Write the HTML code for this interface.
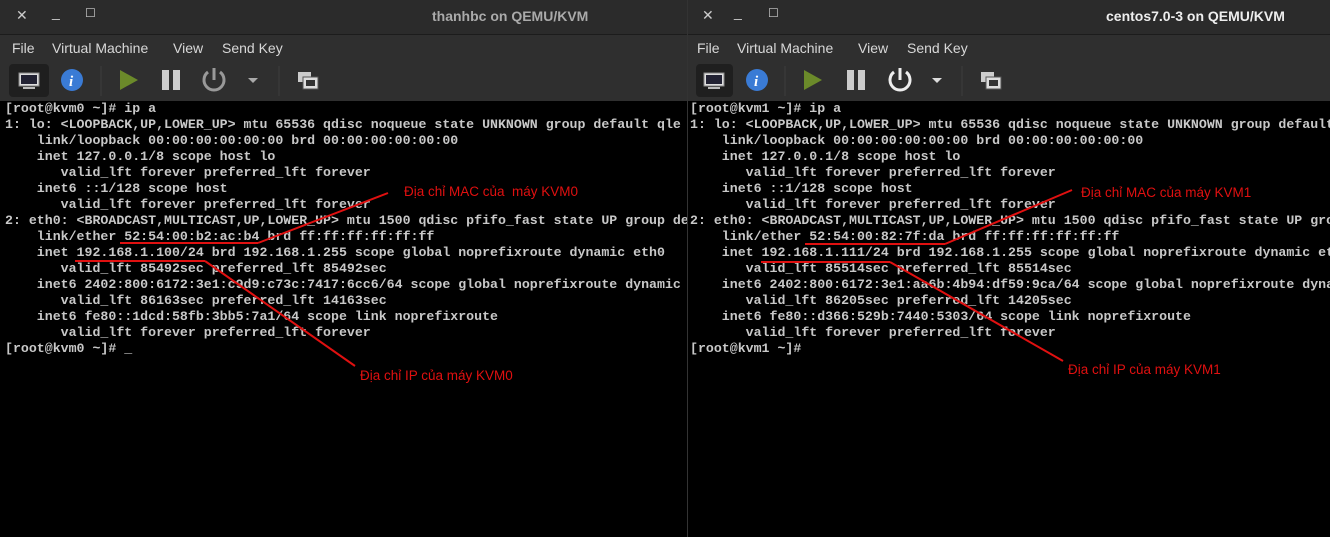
<!DOCTYPE html>
<html><head><meta charset="utf-8"><style>
body{margin:0;width:1330px;height:537px;background:#000;overflow:hidden;position:relative;font-family:"Liberation Sans",sans-serif}
.win{position:absolute;top:0;height:537px;background:#000;overflow:hidden}
.title{position:absolute;left:0;right:0;top:0;height:34px;background:#2b2b2b;border-bottom:1px solid #1c1c1c}
.title .t{position:absolute;top:8px;font-weight:bold;font-size:14px}
.wc{position:absolute;top:7px;color:#ccc;font-size:14px}
.menu{position:absolute;left:0;right:0;top:35px;height:25px;background:#2f2f2f;color:#d8d8d8;font-size:14px}
.menu span{position:absolute;top:5px}
.tb{position:absolute;left:0;right:0;top:60px;height:41px;background:#2f2f2f}
pre{position:absolute;margin:0;top:101px;font-family:"Liberation Mono",monospace;font-size:13.25px;line-height:16px;color:#c8c8c8;font-weight:bold;white-space:pre}
.ann{position:absolute;color:#e01010;font-size:13.5px}
</style></head><body>
<div class="win" style="left:0;width:687px">
 <div class="title"><span class="wc" style="left:16px">✕</span><span class="wc" style="left:52px;top:4px">_</span><span class="wc" style="left:85px;top:6px;font-size:12px">☐</span><span class="t" style="left:432px;color:#aaa">thanhbc on QEMU/KVM</span></div>
 <div class="menu"><span style="left:12px">File</span><span style="left:52px">Virtual Machine</span><span style="left:173px">View</span><span style="left:222px">Send Key</span></div>
 <div class="tb">
  <div style="position:absolute;left:9px;top:4px;width:40px;height:33px;background:#1f1f1f;border-radius:4px"></div>
  <svg width="687" height="41" style="position:absolute;left:0;top:0">
   <rect x="19" y="13" width="20" height="13" fill="#ddd" stroke="#888"/><rect x="21" y="15" width="16" height="9" fill="#223"/><rect x="23" y="27" width="12" height="2" fill="#bbb"/>
   <circle cx="72" cy="20" r="11" fill="#3a7bd5"/><text x="69" y="26" fill="#fff" font-size="15" font-weight="bold" font-style="italic" font-family="Liberation Serif">i</text>
   <line x1="101" y1="6" x2="101" y2="36" stroke="#3c3c3c"/>
   <polygon points="120,10 138,20 120,30" fill="#6b8a2a"/>
   <rect x="162" y="10" width="7" height="20" fill="#ccc"/><rect x="173" y="10" width="7" height="20" fill="#ccc"/>
   <path d="M208 12 A10 10 0 1 0 220 12" fill="none" stroke="#999" stroke-width="3"/><line x1="214" y1="8" x2="214" y2="20" stroke="#999" stroke-width="3"/>
   <polygon points="248,18 258,18 253,23" fill="#aaa"/>
   <line x1="279" y1="6" x2="279" y2="36" stroke="#3c3c3c"/>
   <rect x="298" y="12" width="13" height="10" fill="#ccc"/><rect x="303" y="17" width="15" height="12" fill="#ddd" stroke="#555"/><rect x="306" y="20" width="9" height="6" fill="#333"/>
  </svg>
 </div>
<pre style="left:5px">[root@kvm0 ~]# ip a
1: lo: &lt;LOOPBACK,UP,LOWER_UP&gt; mtu 65536 qdisc noqueue state UNKNOWN group default qle
    link/loopback 00:00:00:00:00:00 brd 00:00:00:00:00:00
    inet 127.0.0.1/8 scope host lo
       valid_lft forever preferred_lft forever
    inet6 ::1/128 scope host
       valid_lft forever preferred_lft forever
2: eth0: &lt;BROADCAST,MULTICAST,UP,LOWER_UP&gt; mtu 1500 qdisc pfifo_fast state UP group de
    link/ether 52:54:00:b2:ac:b4 brd ff:ff:ff:ff:ff:ff
    inet 192.168.1.100/24 brd 192.168.1.255 scope global noprefixroute dynamic eth0
       valid_lft 85492sec preferred_lft 85492sec
    inet6 2402:800:6172:3e1:c9d9:c73c:7417:6cc6/64 scope global noprefixroute dynamic
       valid_lft 86163sec preferred_lft 14163sec
    inet6 fe80::1dcd:58fb:3bb5:7a1/64 scope link noprefixroute
       valid_lft forever preferred_lft forever
[root@kvm0 ~]# _</pre>
</div>
<div style="position:absolute;left:687px;top:0;width:1px;height:537px;background:#333"></div>
<div class="win" style="left:688px;width:642px">
 <div class="title"><span class="wc" style="left:14px">✕</span><span class="wc" style="left:46px;top:4px">_</span><span class="wc" style="left:80px;top:6px;font-size:12px">☐</span><span class="t" style="left:418px;color:#eee">centos7.0-3 on QEMU/KVM</span></div>
 <div class="menu"><span style="left:9px">File</span><span style="left:49px">Virtual Machine</span><span style="left:170px">View</span><span style="left:219px">Send Key</span></div>
 <div class="tb">
  <div style="position:absolute;left:8px;top:4px;width:37px;height:33px;background:#1f1f1f;border-radius:4px"></div>
  <svg width="642" height="41" style="position:absolute;left:0;top:0">
   <rect x="16" y="13" width="20" height="13" fill="#ddd" stroke="#888"/><rect x="18" y="15" width="16" height="9" fill="#223"/><rect x="20" y="27" width="12" height="2" fill="#bbb"/>
   <circle cx="69" cy="20" r="11" fill="#3a7bd5"/><text x="66" y="26" fill="#fff" font-size="15" font-weight="bold" font-style="italic" font-family="Liberation Serif">i</text>
   <line x1="97" y1="6" x2="97" y2="36" stroke="#3c3c3c"/>
   <polygon points="116,10 134,20 116,30" fill="#6b8a2a"/>
   <rect x="159" y="10" width="7" height="20" fill="#ccc"/><rect x="170" y="10" width="7" height="20" fill="#ccc"/>
   <path d="M206 12 A10 10 0 1 0 218 12" fill="none" stroke="#eee" stroke-width="3"/><line x1="212" y1="8" x2="212" y2="20" stroke="#eee" stroke-width="3"/>
   <polygon points="244,18 254,18 249,23" fill="#ddd"/>
   <line x1="274" y1="6" x2="274" y2="36" stroke="#3c3c3c"/>
   <rect x="293" y="12" width="13" height="10" fill="#ccc"/><rect x="298" y="17" width="15" height="12" fill="#ddd" stroke="#555"/><rect x="301" y="20" width="9" height="6" fill="#333"/>
  </svg>
 </div>
<pre style="left:2px">[root@kvm1 ~]# ip a
1: lo: &lt;LOOPBACK,UP,LOWER_UP&gt; mtu 65536 qdisc noqueue state UNKNOWN group default qlen
    link/loopback 00:00:00:00:00:00 brd 00:00:00:00:00:00
    inet 127.0.0.1/8 scope host lo
       valid_lft forever preferred_lft forever
    inet6 ::1/128 scope host
       valid_lft forever preferred_lft forever
2: eth0: &lt;BROADCAST,MULTICAST,UP,LOWER_UP&gt; mtu 1500 qdisc pfifo_fast state UP group
    link/ether 52:54:00:82:7f:da brd ff:ff:ff:ff:ff:ff
    inet 192.168.1.111/24 brd 192.168.1.255 scope global noprefixroute dynamic eth0
       valid_lft 85514sec preferred_lft 85514sec
    inet6 2402:800:6172:3e1:aa6b:4b94:df59:9ca/64 scope global noprefixroute dynamic
       valid_lft 86205sec preferred_lft 14205sec
    inet6 fe80::d366:529b:7440:5303/64 scope link noprefixroute
       valid_lft forever preferred_lft forever
[root@kvm1 ~]#</pre>
</div>
<svg width="1330" height="537" style="position:absolute;left:0;top:0" stroke="#e01010" stroke-width="2">
 <line x1="120" y1="243" x2="258" y2="243"/><line x1="258" y1="243" x2="388" y2="193"/>
 <line x1="75" y1="261" x2="205" y2="261"/><line x1="205" y1="261" x2="355" y2="366"/>
 <line x1="805" y1="244" x2="945" y2="244"/><line x1="945" y1="244" x2="1072" y2="190"/>
 <line x1="761" y1="262" x2="890" y2="262"/><line x1="890" y1="262" x2="1063" y2="361"/>
</svg>
<div class="ann" style="left:404px;top:184px">Địa chỉ MAC của&nbsp; máy KVM0</div>
<div class="ann" style="left:360px;top:368px">Địa chỉ IP của máy KVM0</div>
<div class="ann" style="left:1081px;top:185px">Địa chỉ MAC của máy KVM1</div>
<div class="ann" style="left:1068px;top:362px">Địa chỉ IP của máy KVM1</div>
</body></html>
